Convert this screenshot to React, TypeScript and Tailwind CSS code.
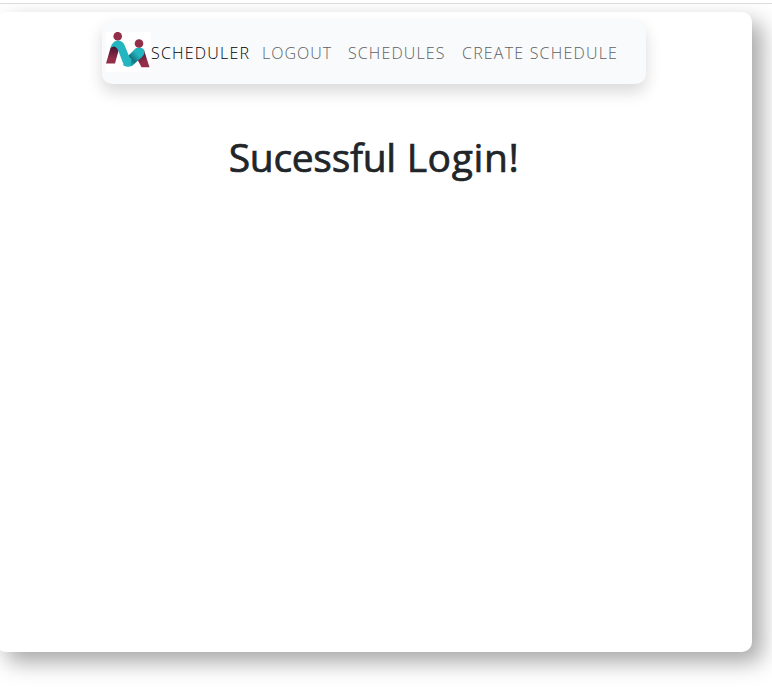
function Logo() {
  return (
    <svg className="block h-10 w-[45px] shrink-0 bg-white" viewBox="0 0 45 40">
      <defs>
        <linearGradient id="left" x1="0" y1="0" x2="0" y2="1">
          <stop offset="0.15" stopColor="#4a1634" />
          <stop offset="0.75" stopColor="#932e48" />
        </linearGradient>
        <linearGradient id="right" x1="0" y1="0" x2="0.4" y2="1">
          <stop offset="0.25" stopColor="#4a1634" />
          <stop offset="0.8" stopColor="#932e48" />
        </linearGradient>
        <linearGradient id="teal" gradientUnits="userSpaceOnUse" x1="22" y1="32" x2="38" y2="18">
          <stop offset="0" stopColor="#23b6c1" />
          <stop offset="0.3" stopColor="#157580" />
          <stop offset="0.65" stopColor="#23b6c1" />
        </linearGradient>
      </defs>
      <path d="M0 31.500 4.500 16Q7 11 11 13L13 17 9 31.500Z" fill="url(#left)" />
      <path d="M29.500 24 38 18 43.500 35.200H35.500Z" fill="url(#right)" />
      <path d="M17 33Q20 36 26 34L36 25Q40 21 37.500 17 35 14.500 30 16L22 24Z" fill="url(#teal)" />
      <path d="M4.500 16Q6.500 8.500 12 8.500 16.500 8.500 18.500 13L23 24Q24 27 25.500 27L24 34Q19 35 17 31L12 18Q9 12 4.500 16Z" fill="#23b6c1" />
      <circle cx="11.700" cy="4.200" r="4.300" fill="#932e48" />
      <circle cx="33" cy="11.500" r="4.300" fill="#932e48" />
    </svg>
  );
}

export default function App() {
  return (
    <div className="h-[691px] w-full overflow-hidden bg-white pt-[3px] font-['Open_Sans','Noto_Sans',sans-serif]">
      <div className="h-[688px] overflow-hidden border-t border-[#dadce0] pt-2">
        <main className="-ml-1 h-[640px] w-[756px] rounded-[10px] bg-white pt-2 shadow-[10px_10px_22px_rgba(0,0,0,0.35)]">
          <nav className="ml-[106px] flex h-16 w-[544px] rounded-[10px] bg-[#f8fafc] pl-1 pt-3 text-base font-light text-[#606060] shadow-[0_8px_16px_rgba(0,0,0,0.15)]">
            <Logo />
            <div className="mt-px flex h-10 items-center whitespace-nowrap tracking-[1.2px]">
              <span className="w-[111px] text-black">SCHEDULER</span>
              <span className="w-[86px] tracking-[1px]">LOGOUT</span>
              <span className="w-[114px] tracking-[1.1px]">SCHEDULES</span>
              <span>CREATE SCHEDULE</span>
            </div>
          </nav>
          <h1 className="mt-[49px] text-center text-[39px] font-medium leading-[48px] tracking-[0.6px] text-[#212529] [-webkit-text-stroke:0.7px_#212529]">
            <span className="tracking-[-0.3px]">Sucessful</span> Login!
          </h1>
        </main>
      </div>
    </div>
  );
}
